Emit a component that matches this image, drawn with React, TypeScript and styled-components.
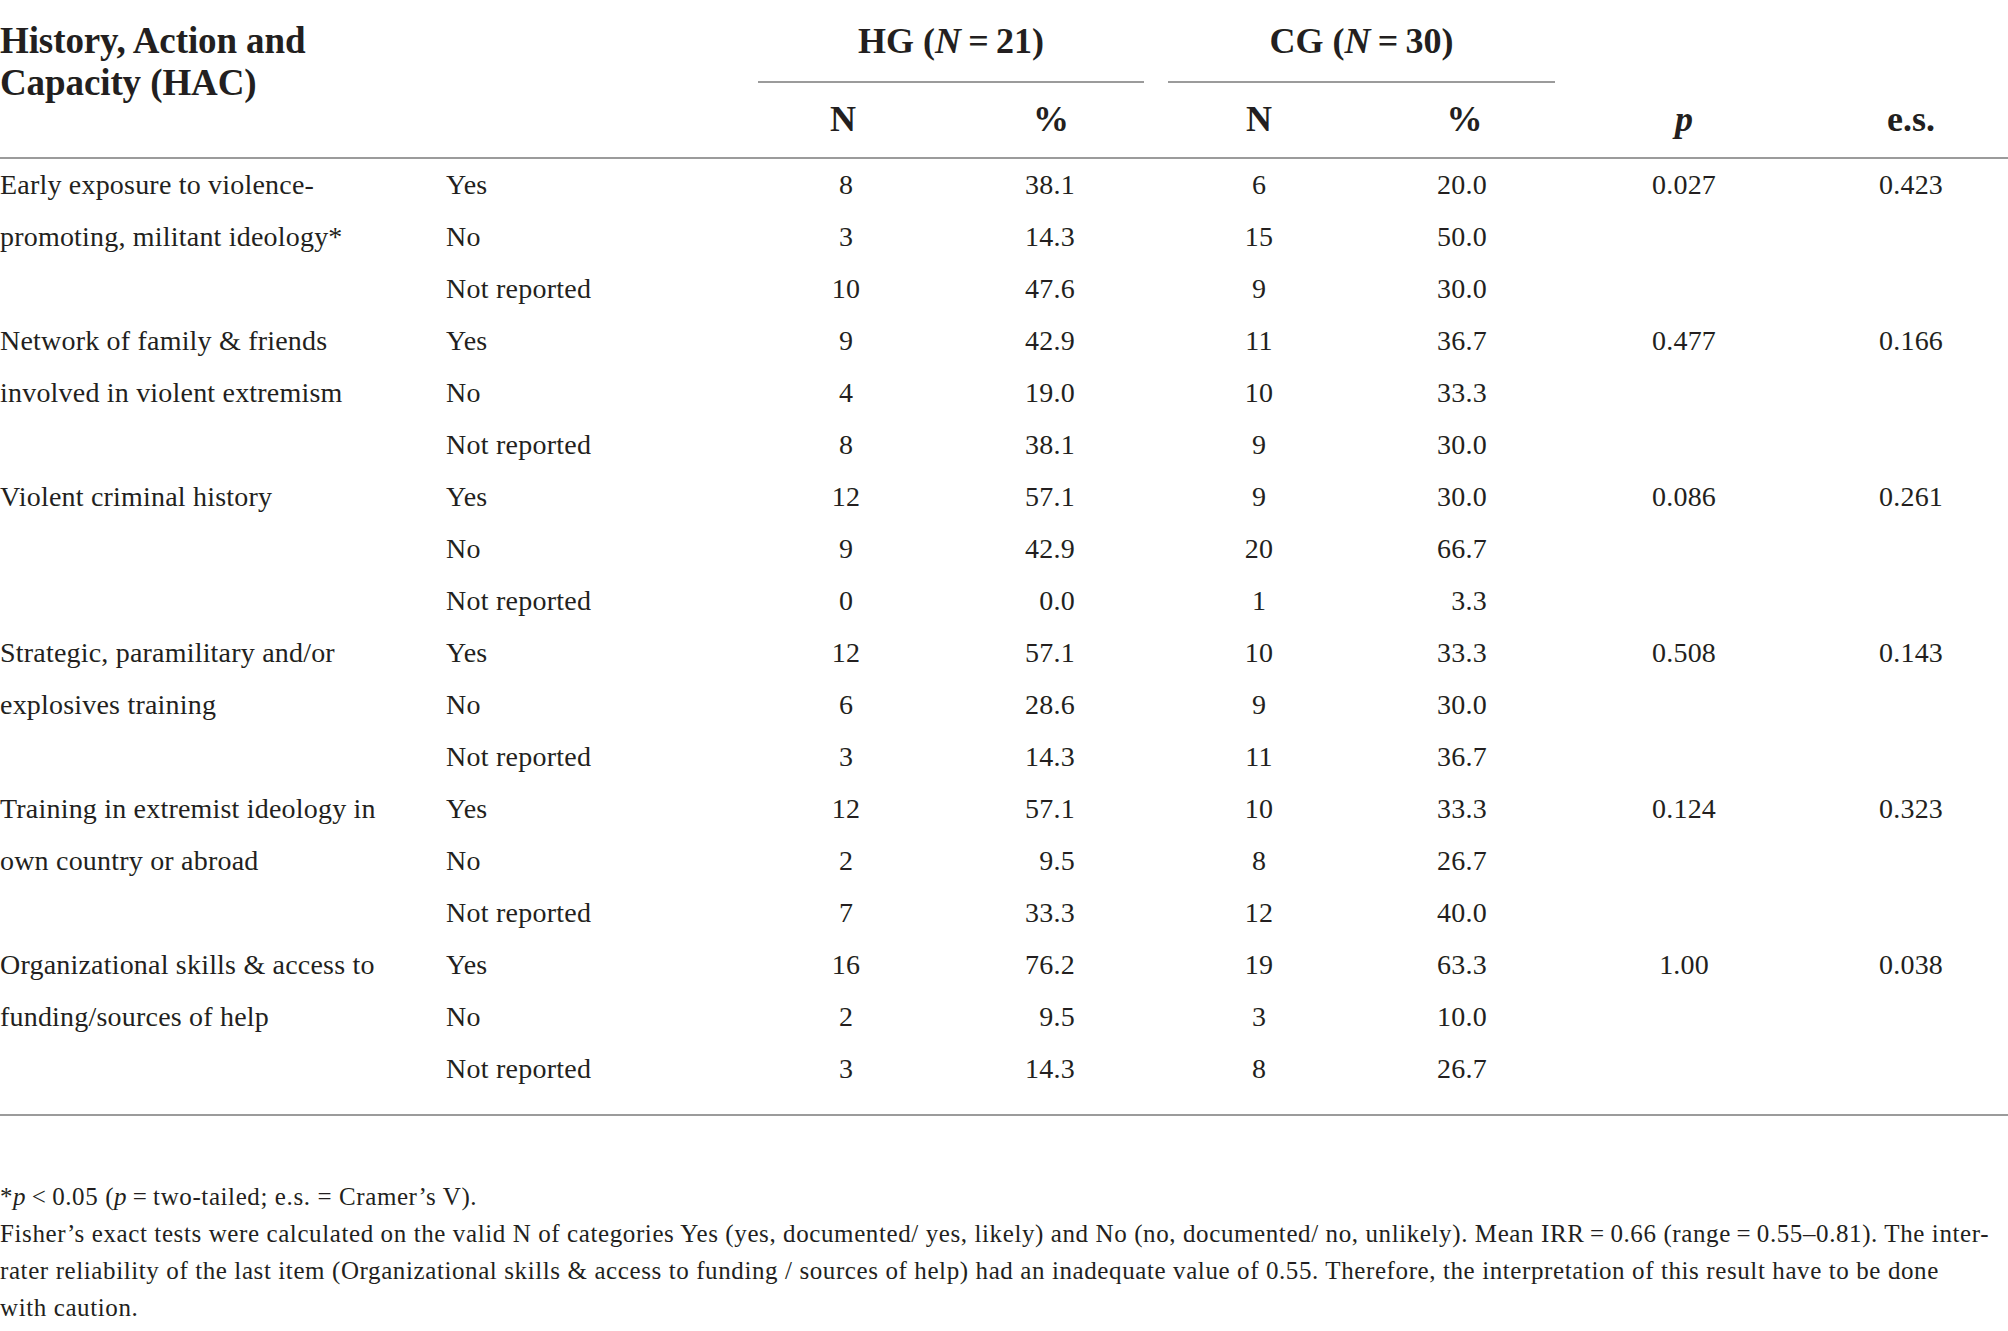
import React from 'react'
import styled, { createGlobalStyle } from 'styled-components'

const GlobalStyle = createGlobalStyle`
  html, body {
    margin: 0;
    padding: 0;
    background: #ffffff;
  }

  body {
    font-family: "Liberation Serif", "Times New Roman", serif;
    color: #231f20;
    overflow-x: hidden;
  }
`

type Answer = {
	cat: string
	hgN: string
	hgP: string
	cgN: string
	cgP: string
}

type Item = {
	label: string[]
	p: string
	es: string
	rows: Answer[]
}

const ans = (cat: string, hgN: string, hgP: string, cgN: string, cgP: string): Answer =>
	({ cat, hgN, hgP, cgN, cgP })

const items: Item[] = [
	{
		label: ['Early exposure to violence-', 'promoting, militant ideology*'],
		p: '0.027', es: '0.423',
		rows: [ans('Yes', '8', '38.1', '6', '20.0'), ans('No', '3', '14.3', '15', '50.0'), ans('Not reported', '10', '47.6', '9', '30.0')],
	},
	{
		label: ['Network of family & friends', 'involved in violent extremism'],
		p: '0.477', es: '0.166',
		rows: [ans('Yes', '9', '42.9', '11', '36.7'), ans('No', '4', '19.0', '10', '33.3'), ans('Not reported', '8', '38.1', '9', '30.0')],
	},
	{
		label: ['Violent criminal history'],
		p: '0.086', es: '0.261',
		rows: [ans('Yes', '12', '57.1', '9', '30.0'), ans('No', '9', '42.9', '20', '66.7'), ans('Not reported', '0', '0.0', '1', '3.3')],
	},
	{
		label: ['Strategic, paramilitary and/or', 'explosives training'],
		p: '0.508', es: '0.143',
		rows: [ans('Yes', '12', '57.1', '10', '33.3'), ans('No', '6', '28.6', '9', '30.0'), ans('Not reported', '3', '14.3', '11', '36.7')],
	},
	{
		label: ['Training in extremist ideology in', 'own country or abroad'],
		p: '0.124', es: '0.323',
		rows: [ans('Yes', '12', '57.1', '10', '33.3'), ans('No', '2', '9.5', '8', '26.7'), ans('Not reported', '7', '33.3', '12', '40.0')],
	},
	{
		label: ['Organizational skills & access to', 'funding/sources of help'],
		p: '1.00', es: '0.038',
		rows: [ans('Yes', '16', '76.2', '19', '63.3'), ans('No', '2', '9.5', '3', '10.0'), ans('Not reported', '3', '14.3', '8', '26.7')],
	},
]

const colWidths = [446, 300, 200, 210, 206, 205, 234, 207]

const T = '\u2009'

export default function App() {
	return (
		<Page>
			<GlobalStyle />
			<Frame>
				<Table>
					<colgroup>
						{colWidths.map((w, i) => <Col key={i} $w={w} />)}
					</colgroup>
					<Head>
						<tr>
							<LabelHead rowSpan={2}>
								History, Action and<br />Capacity (HAC)
							</LabelHead>
							<HeadCell rowSpan={2} />
							<GroupCell colSpan={2}>
								<GroupTitle>HG ({<i>N</i>}{T}={T}21)</GroupTitle>
							</GroupCell>
							<GroupCell colSpan={2}>
								<GroupTitle>CG ({<i>N</i>}{T}={T}30)</GroupTitle>
							</GroupCell>
							<HeadCell colSpan={2} />
						</tr>
						<tr>
							<SubHead $shift={-6}>N</SubHead>
							<SubHead>%</SubHead>
							<SubHead>N</SubHead>
							<SubHead>%</SubHead>
							<SubHead><i>p</i></SubHead>
							<SubHead $shift={13}>e.s.</SubHead>
						</tr>
					</Head>
					<tbody>
						{items.map((item, gi) =>
							item.rows.map((r, ri) => (
								<tr key={`${gi}-${ri}`}>
									{ri === 0 && (
										<LabelCell rowSpan={3}>
											{item.label.map((l, li) => <LabelLine key={li}>{l}</LabelLine>)}
										</LabelCell>
									)}
									<Cell>{r.cat}</Cell>
									<Cell $align='center'>{r.hgN}</Cell>
									<Cell $align='right' $pad={81}>{r.hgP}</Cell>
									<Cell $align='center'>{r.cgN}</Cell>
									<Cell $align='right' $pad={80}>{r.cgP}</Cell>
									{ri === 0 && (
										<>
											<StatCell rowSpan={3}>{item.p}</StatCell>
											<StatCell rowSpan={3} $shift={13}>{item.es}</StatCell>
										</>
									)}
								</tr>
							))
						)}
					</tbody>
				</Table>
			</Frame>

			<Notes>
				<NoteLine>
					*<i>p</i>{T}&lt;{T}0.05 (<i>p</i>{T}={T}two-tailed; e.s. = Cramer’s V).
				</NoteLine>
				<NoteLine>
					Fisher’s exact tests were calculated on the valid N of categories Yes (yes, documented/ yes, likely) and No (no, documented/ no, unlikely). Mean IRR{T}={T}0.66 (range{T}={T}0.55–0.81). The inter-
				</NoteLine>
				<NoteLine>
					rater reliability of the last item (Organizational skills &amp; access to funding / sources of help) had an inadequate value of 0.55. Therefore, the interpretation of this result have to be done
				</NoteLine>
				<NoteLine>with caution.</NoteLine>
			</Notes>
		</Page>
	)
}

const Page = styled.div`
    width: 2008px;
    min-height: 1331px;
    background: #ffffff;
`

const Frame = styled.div`
    padding-bottom: 19px;
    border-bottom: 2px solid #9b9b9b;
`

const Table = styled.table`
    width: 2008px;
    table-layout: fixed;
    border-collapse: collapse;
    border-spacing: 0;
`

const Col = styled.col<{ $w: number }>`
    width: ${p => p.$w}px;
`

const Head = styled.thead`
    border-bottom: 2px solid #9b9b9b;
`

const HeadCell = styled.th`
    padding: 0;
`

const LabelHead = styled.th`
    padding: 20px 0 0 0;
    vertical-align: top;
    text-align: left;

    font-size: 37px;
    font-weight: 700;
    line-height: 42px;
    letter-spacing: -0.1px;
`

const GroupCell = styled.th`
    padding: 0 12px;
    height: 83px;
    vertical-align: top;
`

const GroupTitle = styled.div`
    height: 81px;
    border-bottom: 2px solid #9b9b9b;

    display: flex;
    align-items: center;
    justify-content: center;

    font-size: 36px;
    font-weight: 700;
    white-space: nowrap;
`

const SubHead = styled.th<{ $shift?: number }>`
    height: 71px;
    padding: 0 ${p => (p.$shift && p.$shift < 0 ? -p.$shift : 0)}px 3px ${p => (p.$shift && p.$shift > 0 ? p.$shift : 0)}px;
    text-align: center;
    vertical-align: middle;

    font-size: 36px;
    font-weight: 700;
`

const Cell = styled.td<{ $align?: 'left' | 'center' | 'right'; $pad?: number }>`
    height: 52px;
    padding: 0 ${p => p.$pad || 0}px 0 0;
    text-align: ${p => p.$align || 'left'};
    vertical-align: middle;

    font-size: 28px;
    line-height: 52px;
    letter-spacing: 0.25px;
    white-space: nowrap;
`

const LabelCell = styled.td`
    padding: 0;
    vertical-align: top;

    font-size: 28px;
    line-height: 52px;
    letter-spacing: 0.2px;
`

const LabelLine = styled.div`
    white-space: nowrap;
`

const StatCell = styled.td<{ $shift?: number }>`
    padding: 0 0 0 ${p => p.$shift || 0}px;
    text-align: center;
    vertical-align: top;

    font-size: 28px;
    line-height: 52px;
    letter-spacing: 0.2px;
`

const Notes = styled.div`
    margin-top: 62px;
    font-size: 25px;
    line-height: 37px;
    letter-spacing: 0.6px;
`

const NoteLine = styled.div`
    white-space: nowrap;
`
